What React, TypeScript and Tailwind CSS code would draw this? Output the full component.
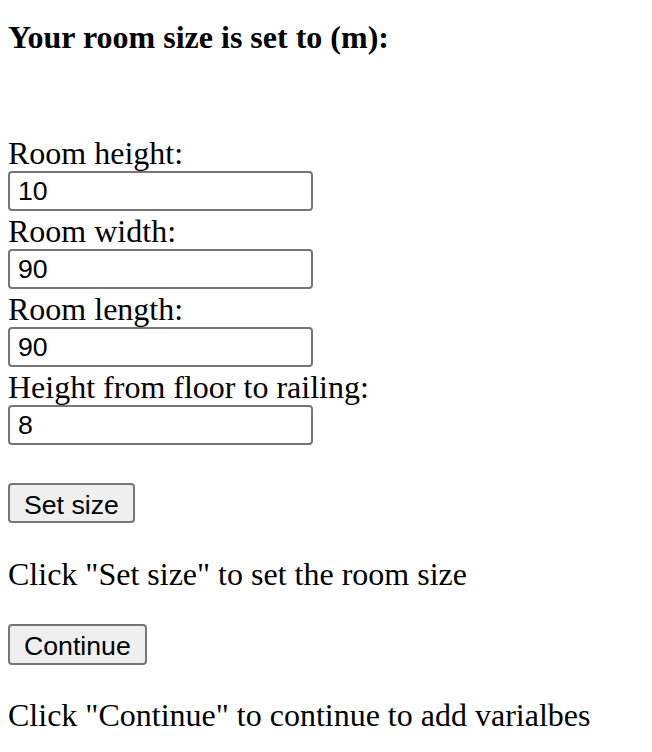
import { useState } from "react";

const serif = "font-['Liberation_Serif','Times_New_Roman',serif]";
const sans = "font-['Liberation_Sans',Arial,sans-serif]";

const fields = [
  { label: "Room height:", value: "10" },
  { label: "Room width:", value: "90" },
  { label: "Room length:", value: "90" },
  { label: "Height from floor to railing:", value: "8" },
];

const App = () => {
  const [values, setValues] = useState(fields.map((f) => f.value));

  return (
    <div className={`min-h-screen bg-white text-black px-2 ${serif}`}>
      {/* Heading */}
      <h4 className="pt-[19px] text-[32px] leading-[37px] font-bold">
        Your room size is set to (m):
      </h4>

      {/* Size form */}
      <div className="mt-[77px] flex flex-col">
        {fields.map((field, i) => (
          <div key={i} className="flex flex-col">
            <label className="h-[38px] pt-[2px] text-[32px] leading-[36px]">
              {field.label}
            </label>
            <input
              value={values[i]}
              onChange={(e) =>
                setValues(values.map((v, j) => (j === i ? e.target.value : v)))
              }
              className={`h-[40px] w-[305px] rounded-[4px] border-2 border-[#767676] bg-white px-[8px] text-[26.67px] text-black outline-none ${sans}`}
            />
          </div>
        ))}
      </div>

      <button
        className={`mt-[38px] h-[40px] rounded-[4px] border-2 border-[#767676] bg-[#efefef] px-[14px] pb-[2px] text-[26.67px] text-black ${sans}`}
      >
        Set size
      </button>
      <p className="mt-[33px] text-[32px] leading-[37px]">
        Click "Set size" to set the room size
      </p>

      <button
        className={`mt-[31px] h-[41px] rounded-[4px] border-2 border-[#767676] bg-[#efefef] px-[14px] pb-[2px] text-[26.67px] text-black ${sans}`}
      >
        Continue
      </button>
      <p className="mt-[32px] text-[32px] leading-[37px]">
        Click "Continue" to continue to add varialbes
      </p>
    </div>
  );
};

export default App;
